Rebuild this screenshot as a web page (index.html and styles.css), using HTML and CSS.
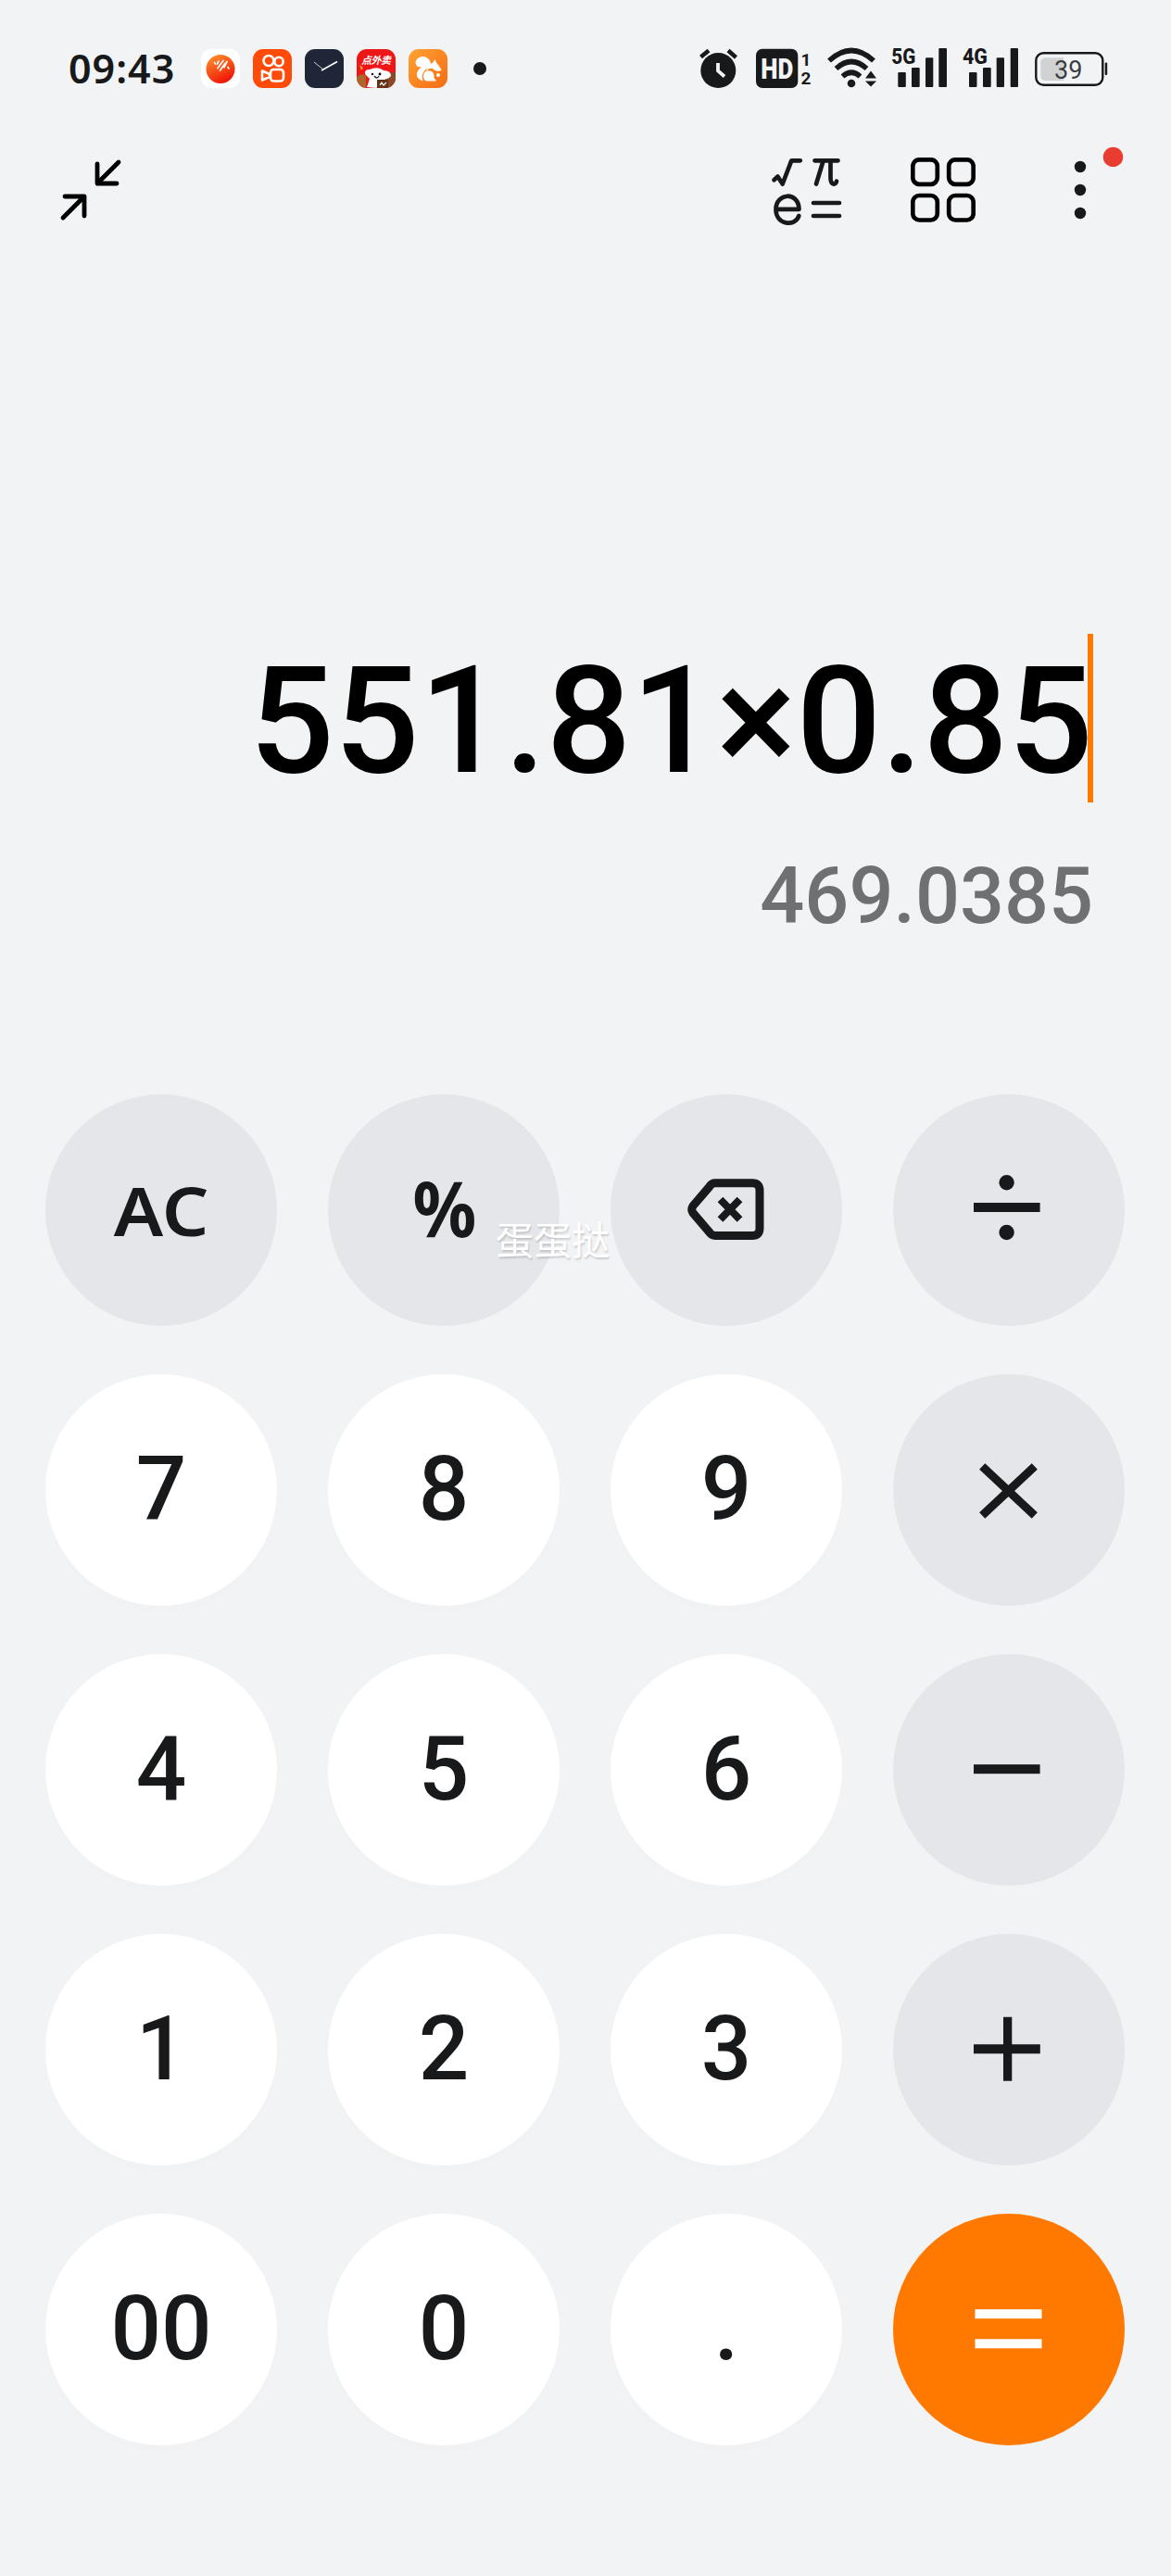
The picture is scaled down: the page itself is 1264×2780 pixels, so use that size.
FILE: index.html
```html
<!DOCTYPE html>
<html lang="zh-CN">
<head>
<meta charset="utf-8">
<title>计算器</title>
<link rel="stylesheet" href="styles.css">
</head>
<body>
<main class="phone">
  <header class="status">
    <div class="status-left">
      <span class="clock">09:43</span>
      <div class="apps">
        <svg class="app" viewBox="0 0 42 42">
          <defs><linearGradient id="ball" x1="0" y1="0" x2="0.5" y2="1"><stop offset="0" stop-color="#ff9a2e"/><stop offset="1" stop-color="#f01808"/></linearGradient></defs>
          <rect width="42" height="42" rx="11" fill="#fff"/>
          <circle cx="21" cy="21.500" r="15.500" fill="url(#ball)"/>
          <path d="M14.500 14.500l1 1.500M19 13l-1.500 3M18 20.500l6-8M20.500 23l5.500-7.500M28 13.500l-3 6M29 19.500l1 1.500" stroke="#fff" stroke-width="1.700" stroke-linecap="round" fill="none"/>
        </svg>
        <svg class="app" viewBox="0 0 42 42">
          <rect width="42" height="42" rx="11" fill="#ff4a08"/>
          <g fill="none" stroke="#fff" stroke-width="2.600" stroke-linejoin="round"><circle cx="17" cy="12.500" r="5.500"/><circle cx="28" cy="13.500" r="4.700"/><rect x="19" y="22" width="14" height="12.500" rx="3.500"/><path d="M18 27l-8-3.500v10l8-3.500z"/></g>
        </svg>
        <svg class="app" viewBox="0 0 42 42">
          <rect width="42" height="42" rx="11" fill="#1f2638"/>
          <path d="M10 14l10 8" stroke="#c7ccd6" stroke-width="1"/><path d="M18 23l17-9.500" stroke="#fff" stroke-width="1.700"/>
        </svg>
        <svg class="app" viewBox="0 0 42 42">
          <defs><clipPath id="tile"><rect width="42" height="42" rx="11"/></clipPath></defs>
          <g clip-path="url(#tile)">
            <rect width="42" height="42" fill="#ed1717"/>
            <path d="M0 30q6-5 10-1v13H0z" fill="#a9672c"/><path d="M33 25h9v17H24z" fill="#8b4825"/>
            <path d="M11 41l3-9-5-5q-1-5 5-5 9-4 15 1 8 0 8 6-3 4-6 3l-2 5-8 5z" fill="#fff"/>
            <path d="M3 17l4 3-2 3z" fill="#f7a325"/><circle cx="17" cy="27" r="1.200"/><circle cx="25" cy="27" r="1.400"/><path d="M19 29q3 4 5 0" fill="none" stroke="#222" stroke-width="1.300"/>
            <rect x="22" y="33" width="12" height="9" fill="#633315"/><path d="M25 39l2-3 2 3 3-3" stroke="#fff" stroke-width="1.200" fill="none"/>
          </g>
          <text class="tile-label" x="5" y="16" textLength="32">点外卖</text>
        </svg>
        <svg class="app" viewBox="0 0 42 42">
          <defs><linearGradient id="fox" x1="0" y1="0" x2="1" y2="1"><stop offset="0" stop-color="#ffa333"/><stop offset="1" stop-color="#f66a13"/></linearGradient></defs>
          <rect width="42" height="42" rx="11" fill="url(#fox)"/>
          <path d="M16 34.500C7 32 6.500 25 14 19.500 9 20 6.500 16 8 12.500c3-6.500 13-6 15.500 1 1 4-2 6-5 8.500-4 4-5 8-2.500 12.500z" fill="#fff"/>
          <path d="M19 23.500c1-6 4-8 7-8.500l2.500-4 2 4.500c2 2 4 4.500 5 7.500-4 1.500-7 .5-9.500-2-3-1-5 .5-7 2.500z" fill="#fff"/>
          <path d="M30 34.500H19.500c-4.500-1-5-9 0-11 5-1.500 9 2.500 8 7.500z" fill="#fff"/><circle cx="32" cy="28" r="2" fill="#fff"/>
        </svg>
      </div>
      <span class="more-dot"></span>
    </div>
    <svg class="status-right" viewBox="754 40 444 68">
      <g fill="#17191b">
        <circle cx="775.300" cy="76" r="19"/>
        <path d="M756.500 61.500l8.500-7M786 54.500l8.500 7.500" stroke="#17191b" stroke-width="4.500"/>
        <path d="M775 68v8.500l7 6" stroke="#f2f3f5" stroke-width="3.800" fill="none"/>
        <rect x="816" y="52.800" width="45.300" height="42.200" rx="7"/>
        <text class="hd" x="821.200" y="85" textLength="35" lengthAdjust="spacingAndGlyphs">HD</text>
        <text class="sim" x="864.500" y="71">1</text>
        <text class="sim" x="864.500" y="91">2</text>
      </g>
      <g fill="none" stroke="#17191b" stroke-width="5.600">
        <path d="M895 65.500Q919 43.500 943 65.500"/><path d="M902.500 74Q919 59 935.500 74"/><path d="M909.500 82.500Q919 74 928.500 82.500"/>
      </g>
      <g fill="#17191b">
        <circle cx="919" cy="90" r="4.300"/>
        <path d="M934 84.500l6-8 6 8zM934 87.500h12l-6 6z"/>
        <text class="net" x="962.300" y="69.300" textLength="26" lengthAdjust="spacingAndGlyphs">5G</text>
        <rect x="969.300" y="78" width="8.500" height="16" rx="1"/><rect x="984" y="73" width="8.700" height="21" rx="1"/><rect x="999" y="62.300" width="8.300" height="31.700" rx="1"/><rect x="1013.300" y="52" width="8.700" height="42" rx="1"/>
        <text class="net" x="1039" y="69.300" textLength="27" lengthAdjust="spacingAndGlyphs">4G</text>
        <rect x="1046" y="78" width="8.500" height="16" rx="1"/><rect x="1061" y="73" width="8.700" height="21" rx="1"/><rect x="1075.700" y="62.300" width="8.300" height="31.700" rx="1"/><rect x="1090.700" y="52" width="8.300" height="42" rx="1"/>
        <rect x="1192.700" y="67.500" width="2.500" height="13.500" rx="1"/>
      </g>
      <rect x="1118.300" y="57.300" width="72" height="34.400" rx="8" fill="none" stroke="#17191b" stroke-width="2.400"/>
      <path d="M1148 62.300h-19.700a5 5 0 0 0-5 5v14.700a5 5 0 0 0 5 5h19.700z" fill="#d1d2d4"/>
      <text class="charge" x="1138" y="84.500">39</text>
    </svg>
  </header>

  <nav class="toolbar">
    <svg width="70" height="70" viewBox="63 170 70 70" fill="none" stroke="#000" stroke-width="4.800" stroke-linecap="round" stroke-linejoin="round">
      <path d="M128 175L105 198M105 177V198H126M68 235L91 212M70 212H91V233"/>
    </svg>
    <div class="tools">
      <svg width="78" height="76" viewBox="832 168 78 76" fill="none" stroke="#17191b" stroke-width="4.700" stroke-linecap="round" stroke-linejoin="round">
        <path d="M835.500 194.200l4-3.700 5.200 8 9.600-25.200h9.500"/>
        <path d="M879.500 173.300h25M888.500 174l-7.500 24.500M896.500 174v18c0 8 6 8 6.500 3.500"/>
        <path d="M837.500 225.800H862.500C862 206 837.500 208 837.500 226C837.500 243 858.500 245 862.300 233"/>
        <path d="M878 219h28M878 233h28"/>
      </svg>
      <svg width="70" height="70" viewBox="983 170 70 70" fill="none" stroke="#000" stroke-width="4.700">
        <rect x="985.300" y="172.300" width="26.500" height="26.500" rx="7"/><rect x="1024.200" y="172.300" width="26.500" height="26.500" rx="7"/><rect x="985.300" y="211" width="26.500" height="26.500" rx="7"/><rect x="1024.200" y="211" width="26.500" height="26.500" rx="7"/>
      </svg>
      <svg width="56" height="84" viewBox="1157 156 56 84" fill="#17191b">
        <circle cx="1166" cy="180" r="6.200"/><circle cx="1166" cy="205" r="6.200"/><circle cx="1166" cy="230" r="6.200"/><circle cx="1201.500" cy="169.400" r="10.700" fill="#ea3d31"/>
      </svg>
    </div>
  </nav>

  <section class="display">
    <div class="expression">551.81×0.85<span class="cursor"></span></div>
    <div class="result">469.0385</div>
  </section>

  <section class="keypad">
    <button class="key fn"><span class="ac">AC</span></button>
    <button class="key fn"><span class="percent">%</span></button>
    <button class="key fn"><svg viewBox="0 0 250 250" fill="none" stroke="#17191b"><path d="M113 95.800H153q8 0 8 8V144.500q0 8-8 8H113q-4 0-6.500-4L89 128q-2.500-3.800 0-7.600L106.500 100Q109 95.800 113 95.800z" stroke-width="9"/><path d="M118.500 113.500l21 21.500M139.500 113.500l-21 21.500" stroke-width="8"/></svg></button>
    <button class="key fn"><svg viewBox="0 0 250 250" fill="#17191b"><rect x="87" y="117" width="71.600" height="10"/><circle cx="122.600" cy="95.300" r="8.200"/><circle cx="122.600" cy="149" r="8.200"/></svg></button>

    <button class="key">7</button>
    <button class="key">8</button>
    <button class="key">9</button>
    <button class="key fn"><svg viewBox="0 0 250 250" stroke="#17191b" stroke-width="9"><path d="M96.200 99.500l56.600 53M152.800 99.500l-56.600 53"/></svg></button>

    <button class="key">4</button>
    <button class="key">5</button>
    <button class="key">6</button>
    <button class="key fn"><svg viewBox="0 0 250 250" fill="#17191b"><rect x="87" y="119.200" width="71.600" height="10"/></svg></button>

    <button class="key">1</button>
    <button class="key">2</button>
    <button class="key">3</button>
    <button class="key fn"><svg viewBox="0 0 250 250" fill="#17191b"><path d="M87 119.200h32V89.700h9.300v29.500h30.500v10.100h-30.500v29.400H119v-29.400H87z"/></svg></button>

    <button class="key">00</button>
    <button class="key">0</button>
    <button class="key">.</button>
    <button class="key equals"><svg viewBox="0 0 250 250" fill="#fff"><rect x="88.500" y="103.200" width="72" height="10"/><rect x="88.500" y="135.300" width="72" height="10"/></svg></button>
    <span class="watermark">蛋蛋挞</span>
  </section>
</main>
</body>
</html>
```

FILE: styles.css
```css
* {
  box-sizing: border-box;
}

body {
  margin: 0;
  background: #f2f3f5;
  color: #17191b;
  font-family: Roboto, "Noto Sans", sans-serif;
}

.phone {
  width: 1264px;
  height: 2780px;
  overflow: hidden;
}

.phone svg {
  display: block;
}

.status {
  display: flex;
  justify-content: space-between;
  align-items: center;
  height: 148px;
  padding: 0 66px 0 74px;
}

.status-left {
  display: flex;
  align-items: center;
}

.clock {
  width: 143px;
  font: 600 43px/48px "Noto Sans", sans-serif;
  letter-spacing: 1px;
}

.apps {
  display: flex;
  gap: 14px;
}

.app {
  width: 42px;
  height: 42px;
}

.more-dot {
  width: 14px;
  height: 14px;
  margin-left: 28px;
  border-radius: 50%;
  background: #17191b;
}

.status-right {
  width: 444px;
  height: 68px;
}

.tile-label {
  font: italic 700 11px "Noto Sans CJK SC", sans-serif;
  fill: #fff;
}

.hd {
  font: 900 31px Roboto, sans-serif;
  fill: #f2f3f5;
}

.sim {
  font: 700 19px Roboto, sans-serif;
}

.net {
  font: 800 24.500px Roboto, sans-serif;
}

.charge {
  font: 400 27px Roboto, sans-serif;
  fill: #3c3d3f;
}

.toolbar {
  display: flex;
  justify-content: space-between;
  align-items: flex-end;
  height: 92px;
  padding: 0 51px 0 63px;
}

.tools {
  display: flex;
  align-items: flex-end;
}

.tools svg:first-child {
  margin: 0 73px -4px 0;
}

.tools svg:last-child {
  margin-left: 104px;
}

.display {
  height: 941px;
  padding: 444px 84px 0 0;
  text-align: right;
}

.expression {
  position: relative;
  height: 182px;
  padding-top: 3px;
  color: #000;
  font-size: 161.700px;
  font-weight: 500;
  line-height: 182px;
}

.cursor {
  position: absolute;
  top: 0;
  right: 0;
  width: 6.500px;
  height: 182px;
  background: #ff7800;
}

.result {
  margin-top: 47px;
  color: #6f7072;
  font-size: 84.500px;
  font-weight: 500;
  line-height: 110px;
}

.keypad {
  position: relative;
  display: grid;
  grid-template-columns: repeat(4, 250px);
  grid-auto-rows: 250px;
  gap: 52px 55px;
  padding-left: 49px;
}

.key {
  display: flex;
  align-items: center;
  justify-content: center;
  padding: 0 0 2px;
  border: 0;
  border-radius: 50%;
  background: #fff;
  box-shadow: 0 8px 34px rgba(40, 60, 70, 0.008);
  color: #17191b;
  font: 500 96px/112px Roboto, sans-serif;
}

.key svg {
  width: 250px;
  height: 250px;
}

.fn {
  padding: 0;
  background: #e5e6ea;
  box-shadow: none;
}

.equals {
  padding: 0;
  background: #ff7800;
  box-shadow: none;
}

.ac {
  font: 600 73px/100px "Noto Sans", sans-serif;
  transform: scaleX(1.09);
}

.percent {
  padding: 0 0 6px 2px;
  font: 700 82px/100px "Noto Sans", sans-serif;
  transform: scaleX(0.93);
}

.watermark {
  position: absolute;
  top: 127px;
  left: 535px;
  color: #fff;
  font: 400 41px/56px "Noto Sans CJK SC", sans-serif;
  text-shadow: 1px 2px 2px rgba(0, 0, 0, 0.16);
}
```
